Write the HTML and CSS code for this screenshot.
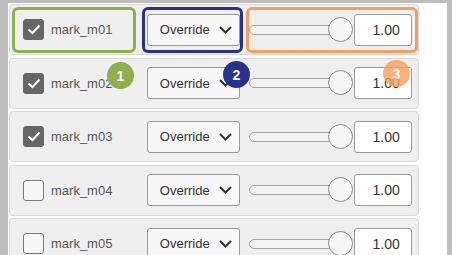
FILE: index.html
```html
<!DOCTYPE html>
<html lang="en">
<head>
	<title>Marks</title>
	<link rel="stylesheet" href="styles.css">
</head>
<body>
	<div class="panel">
		<div class="row">
			<div class="cell cell-label hl-green">
				<span class="check on"><svg width="14" height="11" viewBox="0 0 14 11"><path d="M1.5 5.5 L5.5 9 L12.5 1.5" fill="none" stroke="#fff" stroke-width="2"/></svg></span>
				<span class="name">mark_m01</span>
			</div>
			<div class="cell cell-select hl-navy">
				<div class="select">Override <svg class="chev" width="13" height="8" viewBox="0 0 13 8"><path d="M1 1 L6.5 6.5 L12 1" fill="none" stroke="#333" stroke-width="2"/></svg></div>
			</div>
			<div class="cell cell-value hl-orange">
				<div class="slider"><div class="track"></div><div class="thumb"></div></div>
				<div class="num">1.00</div>
			</div>
		</div>
		<div class="row">
			<div class="cell cell-label">
				<span class="check on"><svg width="14" height="11" viewBox="0 0 14 11"><path d="M1.5 5.5 L5.5 9 L12.5 1.5" fill="none" stroke="#fff" stroke-width="2"/></svg></span>
				<span class="name">mark_m02</span>
			</div>
			<div class="cell cell-select">
				<div class="select">Override <svg class="chev" width="13" height="8" viewBox="0 0 13 8"><path d="M1 1 L6.5 6.5 L12 1" fill="none" stroke="#333" stroke-width="2"/></svg></div>
			</div>
			<div class="cell cell-value">
				<div class="slider"><div class="track"></div><div class="thumb"></div></div>
				<div class="num">1.00</div>
			</div>
		</div>
		<div class="row">
			<div class="cell cell-label">
				<span class="check on"><svg width="14" height="11" viewBox="0 0 14 11"><path d="M1.5 5.5 L5.5 9 L12.5 1.5" fill="none" stroke="#fff" stroke-width="2"/></svg></span>
				<span class="name">mark_m03</span>
			</div>
			<div class="cell cell-select">
				<div class="select">Override <svg class="chev" width="13" height="8" viewBox="0 0 13 8"><path d="M1 1 L6.5 6.5 L12 1" fill="none" stroke="#333" stroke-width="2"/></svg></div>
			</div>
			<div class="cell cell-value">
				<div class="slider"><div class="track"></div><div class="thumb"></div></div>
				<div class="num">1.00</div>
			</div>
		</div>
		<div class="row">
			<div class="cell cell-label">
				<span class="check"></span>
				<span class="name">mark_m04</span>
			</div>
			<div class="cell cell-select">
				<div class="select">Override <svg class="chev" width="13" height="8" viewBox="0 0 13 8"><path d="M1 1 L6.5 6.5 L12 1" fill="none" stroke="#333" stroke-width="2"/></svg></div>
			</div>
			<div class="cell cell-value">
				<div class="slider"><div class="track"></div><div class="thumb"></div></div>
				<div class="num">1.00</div>
			</div>
		</div>
		<div class="row">
			<div class="cell cell-label">
				<span class="check"></span>
				<span class="name">mark_m05</span>
			</div>
			<div class="cell cell-select">
				<div class="select">Override <svg class="chev" width="13" height="8" viewBox="0 0 13 8"><path d="M1 1 L6.5 6.5 L12 1" fill="none" stroke="#333" stroke-width="2"/></svg></div>
			</div>
			<div class="cell cell-value">
				<div class="slider"><div class="track"></div><div class="thumb"></div></div>
				<div class="num">1.00</div>
			</div>
		</div>

		<span class="badge badge-green" style="left: 99px; top: 59px;">1</span>
		<span class="badge badge-navy" style="left: 215px; top: 58px;">2</span>
		<span class="badge badge-orange" style="left: 375px; top: 57px;">3</span>
	</div>
</body>
</html>
```

FILE: styles.css
```css
html, body {
	margin: 0;
	height: 100%;
	overflow: hidden;
}

body {
	background: #bdbdbd;
	font-family: "Liberation Sans", Arial, sans-serif;
	padding: 3px 5px 0 8px;
	box-sizing: border-box;
}

.panel {
	position: relative;
	background: #fff;
	height: 100%;
	padding: 1px 0 0 1px;
	display: flex;
	flex-direction: column;
	gap: 2.5px;
	box-sizing: border-box;
}

.row {
	flex: none;
	width: 410px;
	height: 51px;
	box-sizing: border-box;
	background: #efefef;
	border: 1px solid #d9d9d9;
	border-radius: 4px;
	padding: 0 0 0 2px;
	display: flex;
	align-items: center;
}

.cell {
	height: 46px;
	box-sizing: border-box;
	border: 3px solid transparent;
	border-radius: 6px;
	display: flex;
	align-items: center;
}

.cell-label {
	width: 125px;
	padding-left: 8px;
	margin-right: 6px;
}

.cell-select {
	width: 101px;
	padding-left: 2px;
	margin-right: 3px;
}

.cell-value {
	width: 174px;
	padding-left: 0;
}

.hl-green { border-color: #8db04a; }
.hl-navy { border-color: #29318f; }
.hl-orange { border-color: #f5a05a; }

.check {
	width: 21px;
	height: 21px;
	box-sizing: border-box;
	border: 1px solid #7a7a7a;
	border-radius: 3px;
	background: #f7f7f7;
	display: flex;
	align-items: center;
	justify-content: center;
}

.check.on {
	background: #666;
	border-color: #666;
}

.name {
	margin-left: 7px;
	font-size: 13px;
	color: #555;
}

.select {
	width: 93px;
	height: 32px;
	box-sizing: border-box;
	background: #f7f7f7;
	border: 1px solid #9a9a9a;
	border-radius: 3px;
	padding-left: 12px;
	font-size: 13px;
	color: #333;
	display: flex;
	align-items: center;
}

.chev {
	margin-left: 9px;
}

.slider {
	position: relative;
	width: 104px;
	height: 26px;
	display: flex;
	align-items: center;
}

.track {
	width: 92px;
	height: 10px;
	box-sizing: border-box;
	background: #f4f4f4;
	border: 1px solid #a5a5a5;
	border-radius: 5px;
}

.thumb {
	position: absolute;
	left: 79px;
	top: 0;
	width: 25px;
	height: 25px;
	box-sizing: border-box;
	border-radius: 50%;
	background: #f6f6f6;
	border: 1px solid #8a8a8a;
}

.num {
	margin-left: 1px;
	width: 58px;
	height: 32px;
	box-sizing: border-box;
	background: #fff;
	border: 1px solid #9a9a9a;
	border-radius: 3px;
	font-size: 14px;
	color: #333;
	display: flex;
	align-items: center;
	justify-content: flex-end;
	padding-right: 11px;
}

.badge {
	position: absolute;
	width: 27px;
	height: 27px;
	border-radius: 50%;
	color: #fff;
	font-size: 14px;
	font-weight: bold;
	display: flex;
	align-items: center;
	justify-content: center;
}

.badge-green { background: #8db04a; }
.badge-navy { background: #29318f; }
.badge-orange { background: #f5a05a; opacity: 0.8; }
```
